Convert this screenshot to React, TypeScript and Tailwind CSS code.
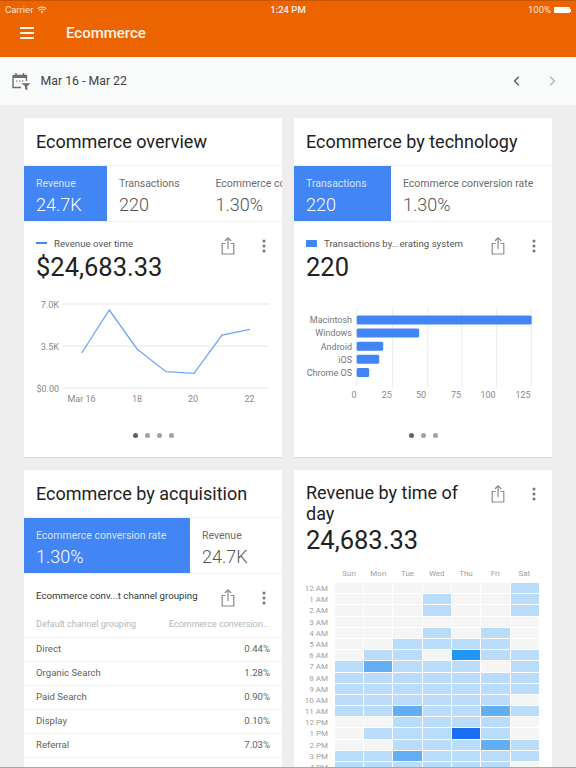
import React from "react";

const font = { fontFamily: "Roboto, sans-serif" };

function ShareIcon() {
  return (
    <svg width="14" height="18" viewBox="0 0 14 18" fill="none" stroke="#8c8c8c" strokeWidth="1.2" className="block">
      <path d="M4.5 6.5H1.2V17H12.8V6.5H9.5" />
      <path d="M7 12V1M3.8 4L7 0.9L10.2 4" />
    </svg>
  );
}

function Dots() {
  return (
    <svg width="4" height="14" viewBox="0 0 4 14" fill="#757575" className="block">
      <circle cx="2" cy="2" r="1.5" />
      <circle cx="2" cy="7" r="1.5" />
      <circle cx="2" cy="12" r="1.5" />
    </svg>
  );
}

function Actions({ className }: { className?: string }) {
  return (
    <div className={"flex items-center gap-[27px] shrink-0 " + (className || "")}>
      <ShareIcon />
      <Dots />
    </div>
  );
}

function Pager({ count }: { count: number }) {
  return (
    <div className="flex justify-center gap-[7px]">
      {Array.from({ length: count }).map((_, i) => (
        <span key={i} className={i === 0 ? "w-[5px] h-[5px] rounded-full bg-[#616161]" : "w-[5px] h-[5px] rounded-full bg-[#a3a3a3]"} />
      ))}
    </div>
  );
}

function Tab({ label, value, active, width }: { label: string; value: string; active?: boolean; width: string }) {
  return (
    <div className={(active ? "bg-[#4285f4] text-white " : "text-[#555555] ") + width + " shrink-0 h-[56px] pl-3 pt-[11px] overflow-hidden"}>
      <div className={"text-[10.5px] leading-[14px] whitespace-nowrap " + (active ? "text-[#d5e3fc]" : "text-[#6b6b6b]")}>{label}</div>
      <div className="text-[18px] leading-[24px] mt-[2px] font-light whitespace-nowrap">{value}</div>
    </div>
  );
}

function Tabs({ children }: { children: React.ReactNode }) {
  return <div className="flex h-[57px] border-t border-[#f0f0f0] border-b overflow-hidden">{children}</div>;
}

function Title({ children }: { children: React.ReactNode }) {
  return <div className="h-[47px] pl-3 pt-[11px] text-[18px] leading-[26px] text-[#212121] whitespace-nowrap">{children}</div>;
}

function LineChart() {
  const pts = "57.7,69 85.3,26 113,65 142,87.7 170,89.3 198,51 226,45.3";
  const gy = [20, 62, 104];
  return (
    <svg width="258" height="124" viewBox="0 0 258 124" className="block" fontFamily="Roboto, sans-serif">
      {gy.map((y) => (
        <line key={y} x1="38" x2="245" y1={y} y2={y} stroke="#e6e6e6" />
      ))}
      <polyline points={pts} fill="none" stroke="#6ea6f7" strokeWidth="1.3" />
      <g fontSize="9" fill="#8a8a8a" textAnchor="end">
        <text x="35" y="23.5">7.0K</text>
        <text x="35" y="65.5">3.5K</text>
        <text x="35" y="107.5">$0.00</text>
      </g>
      <g fontSize="9" fill="#8a8a8a" textAnchor="middle">
        <text x="57.5" y="118">Mar 16</text>
        <text x="113" y="118">18</text>
        <text x="169" y="118">20</text>
        <text x="225.5" y="118">22</text>
      </g>
    </svg>
  );
}

function BarChart() {
  const bars: [string, number][] = [
    ["Macintosh", 175],
    ["Windows", 62.5],
    ["Android", 26.5],
    ["iOS", 22.5],
    ["Chrome OS", 12.5],
  ];
  const grid = [62.7, 98.7, 133.7, 168, 202.7, 237.3];
  const ticks: [string, number][] = [["0", 60], ["25", 92.7], ["50", 127], ["75", 162], ["100", 194], ["125", 229]];
  return (
    <svg width="258" height="100" viewBox="0 0 258 100" className="block" fontFamily="Roboto, sans-serif">
      {grid.map((x) => (
        <line key={x} x1={x} x2={x} y1="1" y2="80" stroke="#ebebeb" />
      ))}
      {bars.map(([n, w], i) => (
        <g key={n}>
          <rect x="62.7" y={8.5 + i * 13.1} width={w} height="9" rx="1.5" fill="#4285f4" />
          <text x="58" y={16.3 + i * 13.1} fontSize="9" fill="#757575" textAnchor="end">{n}</text>
        </g>
      ))}
      {ticks.map(([t, x]) => (
        <text key={t} x={x} y="90.5" fontSize="9" fill="#8a8a8a" textAnchor="middle">{t}</text>
      ))}
    </svg>
  );
}

const rows: [string, string][] = [
  ["Direct", "0.44%"],
  ["Organic Search", "1.28%"],
  ["Paid Search", "0.90%"],
  ["Display", "0.10%"],
  ["Referral", "7.03%"],
];

const hours = ["12 AM", "1 AM", "2 AM", "3 AM", "4 AM", "5 AM", "6 AM", "7 AM", "8 AM", "9 AM", "10 AM", "11 AM", "12 PM", "1 PM", "2 PM", "3 PM", "4 PM"];
const heat = [
  [0, 0, 0, 0, 0, 0, 1],
  [0, 0, 0, 1, 0, 0, 1],
  [0, 0, 0, 1, 0, 0, 1],
  [0, 0, 0, 0, 0, 0, 0],
  [0, 0, 0, 1, 0, 1, 0],
  [0, 0, 1, 1, 1, 1, 0],
  [0, 1, 1, 0, 3, 1, 1],
  [1, 2, 1, 1, 1, 0, 1],
  [1, 1, 1, 1, 1, 1, 1],
  [1, 1, 1, 1, 1, 1, 1],
  [1, 1, 1, 1, 1, 1, 0],
  [1, 1, 2, 1, 1, 2, 1],
  [0, 0, 1, 1, 1, 1, 0],
  [0, 1, 1, 1, 4, 1, 0],
  [0, 0, 1, 1, 1, 2, 1],
  [1, 1, 2, 1, 1, 1, 1],
  [1, 1, 1, 1, 1, 1, 0],
];
const heatClass = ["bg-[#f5f5f5]", "bg-[#b9dcfb]", "bg-[#62aef5]", "bg-[#2196f3]", "bg-[#1a6ff0]"];

function Card({ children, height }: { children: React.ReactNode; height: string }) {
  return <div className={"bg-white overflow-hidden shadow-[0_1px_1px_rgba(0,0,0,0.08)] " + height}>{children}</div>;
}

export default function App() {
  return (
    <div className="w-[576px] h-[768px] overflow-hidden bg-[#eeeeee] border-b border-[#a8a8a8]" style={font}>
      <div className="h-[57px] bg-[#ec6400] border-t border-[#c85500] text-white">
        <div className="h-[18px] flex items-center justify-between pl-[5px] pr-[5px] text-[9.5px] leading-none relative">
          <div className="flex items-center gap-[4px] text-[#ffe3cc]">
            <span>Carrier</span>
            <svg width="10" height="8" viewBox="0 0 10 8" fill="none" stroke="white" strokeWidth="1.1">
              <path d="M0.7 2.6C3 0.5 7 0.5 9.3 2.6M2.2 4.2C3.7 2.9 6.3 2.9 7.8 4.2" />
              <path d="M3.8 5.8L5 7.2L6.2 5.8C5.5 5.2 4.5 5.2 3.8 5.8Z" fill="white" stroke="none" />
            </svg>
          </div>
          <span className="absolute left-0 right-0 text-center font-medium text-[#fff0e4]">1:24 PM</span>
          <div className="flex items-center gap-[3px] text-[#ffe3cc]">
            <span>100%</span>
            <div className="flex items-center">
              <span className="block w-[16px] h-[6px] bg-white rounded-[1px]" />
              <span className="block w-[1px] h-[3px] bg-white" />
            </div>
          </div>
        </div>
        <div className="h-[28px] flex items-center pl-[20px]">
          <div className="w-[14px] flex flex-col gap-[3px]">
            <span className="block h-[2px] bg-[#fff3ea]" />
            <span className="block h-[2px] bg-[#fff3ea]" />
            <span className="block h-[2px] bg-[#fff3ea]" />
          </div>
          <span className="ml-[32px] text-[15px] font-medium text-[#fff3ea]">Ecommerce</span>
        </div>
      </div>

      <div className="h-[48px] bg-[#f9fafa] flex items-center pl-[12px] pr-[20px]">
        <svg width="19" height="19" viewBox="0 0 19 19" fill="none" className="block shrink-0">
          <path d="M1 3.5H14.5V9M9 15.5H1V3.5" stroke="#6e6e6e" strokeWidth="1.4" />
          <path d="M1 3H14.5V6H1Z" fill="#6e6e6e" />
          <path d="M4 1V3.5M11.5 1V3.5" stroke="#6e6e6e" strokeWidth="1.4" />
          <path d="M4 9H5.4M7 9H8.4M10 9H11.4" stroke="#6e6e6e" strokeWidth="1.2" />
          <path d="M9.5 11.2H18.5L15.2 14.2V18.2L13 17V14.2Z" fill="#6e6e6e" />
        </svg>
        <span className="ml-[9.5px] text-[12.3px] text-[#424242]">Mar 16 - Mar 22</span>
        <div className="ml-auto flex items-center gap-[29px]">
          <svg width="7" height="10" viewBox="0 0 7 10" fill="none" stroke="#616161" strokeWidth="1.5"><path d="M5.8 0.8L1.6 5L5.8 9.2" /></svg>
          <svg width="7" height="10" viewBox="0 0 7 10" fill="none" stroke="#b5b5b5" strokeWidth="1.5"><path d="M1.2 0.8L5.4 5L1.2 9.2" /></svg>
        </div>
      </div>

      <div className="grid grid-cols-[258px_258px] gap-x-[12px] gap-y-[13px] pl-[24px] pt-[13px]">
        <Card height="h-[339px]">
          <Title>Ecommerce overview</Title>
          <Tabs>
            <Tab active label="Revenue" value="24.7K" width="w-[83px]" />
            <Tab label="Transactions" value="220" width="w-[96.5px]" />
            <Tab label="Ecommerce conversion rate" value="1.30%" width="w-[78.5px]" />
          </Tabs>
          <div className="flex items-start justify-between pl-3 pr-4 pt-[15px] h-[62px]">
            <div>
              <div className="flex items-center h-[14px]">
                <span className="block w-[11px] h-[2px] bg-[#4285f4] mr-[7px] -mt-[2px]" />
                <span className="text-[9.7px] text-[#555555]">Revenue over time</span>
              </div>
              <div className="text-[25.5px] leading-[32px] text-[#212121]">$24,683.33</div>
            </div>
            <Actions />
          </div>
          <LineChart />
          <div className="mt-[25px]"><Pager count={4} /></div>
        </Card>

        <Card height="h-[339px]">
          <Title>Ecommerce by technology</Title>
          <Tabs>
            <Tab active label="Transactions" value="220" width="w-[97px]" />
            <Tab label="Ecommerce conversion rate" value="1.30%" width="w-[161px]" />
          </Tabs>
          <div className="flex items-start justify-between pl-3 pr-4 pt-[15px] h-[85px]">
            <div>
              <div className="flex items-center h-[14px]">
                <span className="block w-[11px] h-[7px] bg-[#4285f4] mr-[7px] -mt-[2px]" />
                <span className="text-[9.7px] text-[#555555]">Transactions by...erating system</span>
              </div>
              <div className="text-[25.5px] leading-[32px] text-[#212121]">220</div>
            </div>
            <Actions />
          </div>
          <BarChart />
          <div className="mt-[26px]"><Pager count={3} /></div>
        </Card>

        <Card height="h-[320px]">
          <Title>Ecommerce by acquisition</Title>
          <Tabs>
            <Tab active label="Ecommerce conversion rate" value="1.30%" width="w-[166px]" />
            <Tab label="Revenue" value="24.7K" width="w-[92px]" />
          </Tabs>
          <div className="flex items-start justify-between pl-3 pr-4 pt-[15px] h-[39px]">
            <span className="text-[9.7px] leading-[14px] text-[#333333] whitespace-nowrap">Ecommerce conv...t channel grouping</span>
            <Actions />
          </div>
          <div>
            <div className="flex justify-between items-center h-[25px] px-3 text-[9px] text-[#b5b5b5] border-b border-[#f2f2f2]">
              <span>Default channel grouping</span>
              <span>Ecommerce conversion...</span>
            </div>
            {rows.map(([a, b]) => (
              <div key={a} className="flex justify-between items-center h-[24px] px-3 text-[9.6px] text-[#616161] border-b border-[#f2f2f2]">
                <span>{a}</span>
                <span>{b}</span>
              </div>
            ))}
          </div>
        </Card>

        <Card height="h-[320px]">
          <div className="flex items-start justify-between pl-3 pr-4 pt-[12px]">
            <div className="w-[170px] text-[18px] leading-[21px] text-[#212121]">Revenue by time of day</div>
            <Actions className="mt-[3px]" />
          </div>
          <div className="pl-3 mt-[1px] text-[25.5px] leading-[30px] text-[#212121]">24,683.33</div>
          <div className="mt-[13px] pl-[40.5px] pr-[13px] grid grid-cols-7 text-[8px] leading-[12px] text-[#a0a0a0] text-center">
            {["Sun", "Mon", "Tue", "Wed", "Thu", "Fri", "Sat"].map((d) => (
              <span key={d}>{d}</span>
            ))}
          </div>
          <div className="mt-[3px] flex flex-col pr-[13px]">
            {hours.map((h, i) => (
              <div key={h} className="flex h-[11.2px]">
                <span className="w-[34px] mr-[6.5px] text-right text-[8px] leading-[11.2px] text-[#a0a0a0]">{h}</span>
                <div className="flex-1 grid grid-cols-7 gap-x-[1px] pb-[1px]">
                  {heat[i].map((v, j) => (
                    <span key={j} className={"block " + heatClass[v]} />
                  ))}
                </div>
              </div>
            ))}
          </div>
        </Card>
      </div>
    </div>
  );
}
